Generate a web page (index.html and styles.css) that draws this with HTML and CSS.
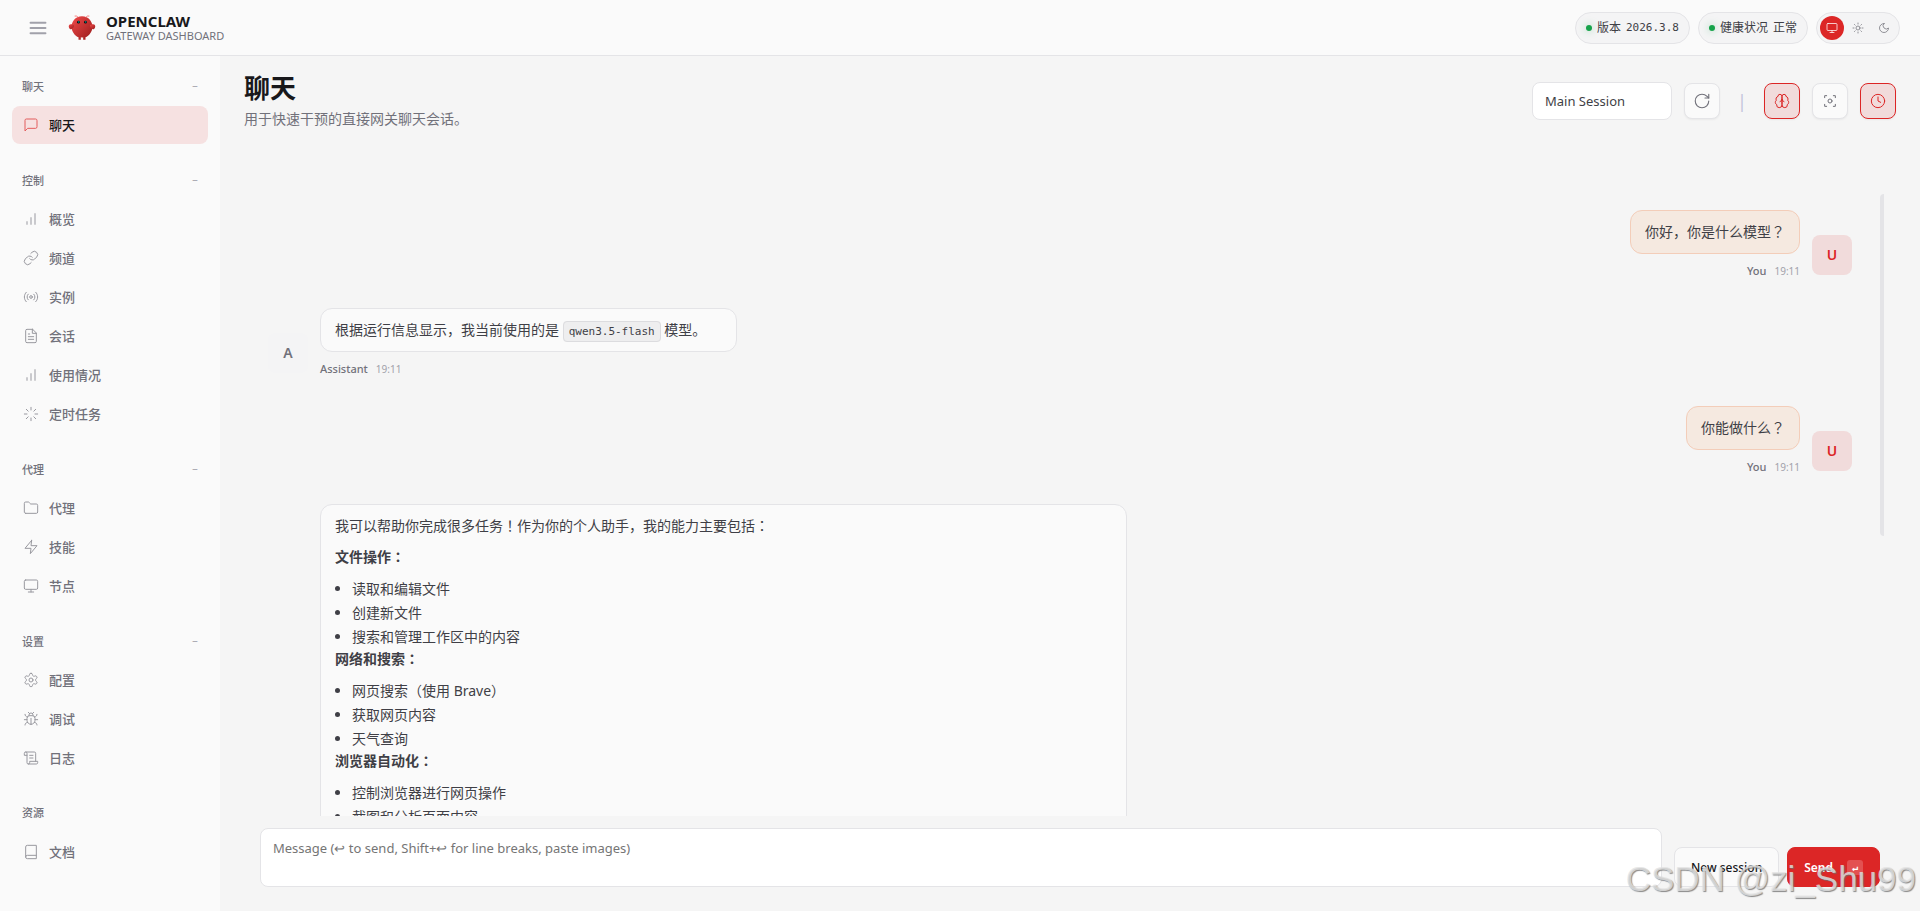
FILE: index.html
```html
<!DOCTYPE html>
<html lang="en">
<head>
    <meta charset="UTF-8">
    <meta name="viewport" content="width=device-width, initial-scale=1.0">
    <title>OpenClaw Control</title>
    <link rel="stylesheet" href="styles.css">
</head>
<body>
    <header class="topbar">
        <button class="menu-toggle" type="button" aria-label="Toggle sidebar">
            <svg class="icon icon-menu" viewBox="0 0 24 24"><path d="M2 5h20M2 12h20M2 19h20"/></svg>
        </button>
        <a class="brand" href="#">
            <svg class="brand-logo" viewBox="0 0 120 120" aria-hidden="true">
                <defs>
                    <linearGradient id="claw" x1="0" y1="0" x2="1" y2="1">
                        <stop offset="0" stop-color="#f04a4a"/>
                        <stop offset="1" stop-color="#991b1b"/>
                    </linearGradient>
                </defs>
                <path d="M60 10C30 10 15 35 15 55s15 40 30 45v10h10v-10s5 2 10 0v10h10v-10c15-5 30-25 30-45S90 10 60 10Z" fill="url(#claw)"/>
                <path d="M20 45C5 40 0 50 5 60s15 5 20-5c3-7 0-10-5-10Z" fill="url(#claw)"/>
                <path d="M100 45c15-5 20 5 15 15s-15 5-20-5c-3-7 0-10 5-10Z" fill="url(#claw)"/>
                <path d="M45 15Q35 5 30 8M75 15q10-10 15-7" fill="none" stroke="#f04a4a" stroke-width="3" stroke-linecap="round"/>
                <circle cx="45" cy="35" r="6" fill="#050810"/>
                <circle cx="75" cy="35" r="6" fill="#050810"/>
                <circle cx="46" cy="34" r="2.5" fill="#00e5cc"/>
                <circle cx="76" cy="34" r="2.5" fill="#00e5cc"/>
            </svg>
            <span class="brand-text">
                <strong class="brand-title">OPENCLAW</strong>
                <span class="brand-sub">GATEWAY DASHBOARD</span>
            </span>
        </a>
        <div class="topbar-status">
            <div class="pill"><span class="dot"></span><span>版本</span><span class="mono">2026.3.8</span></div>
            <div class="pill"><span class="dot"></span><span>健康状况</span><span>正常</span></div>
            <div class="theme-toggle">
                <button class="theme-btn active" type="button" aria-label="System theme">
                    <svg class="icon" viewBox="0 0 24 24"><rect x="2" y="3" width="20" height="14" rx="2"/><path d="M8 21h8M12 17v4"/></svg>
                </button>
                <button class="theme-btn" type="button" aria-label="Light theme">
                    <svg class="icon" viewBox="0 0 24 24"><circle cx="12" cy="12" r="4"/><path d="M12 2v2M12 20v2M4.93 4.93l1.41 1.41M17.66 17.66l1.41 1.41M2 12h2M20 12h2M6.34 17.66l-1.41 1.41M19.07 4.93l-1.41 1.41"/></svg>
                </button>
                <button class="theme-btn" type="button" aria-label="Dark theme">
                    <svg class="icon" viewBox="0 0 24 24"><path d="M12 3a6 6 0 0 0 9 9 9 9 0 1 1-9-9Z"/></svg>
                </button>
            </div>
        </div>
    </header>

    <div class="shell">
        <nav class="sidebar">
            <section class="nav-group">
                <button class="nav-label" type="button"><span>聊天</span><span class="nav-chevron">−</span></button>
                <a class="nav-item active" href="#"><svg class="icon" viewBox="0 0 24 24"><path d="M21 15a2 2 0 0 1-2 2H7l-4 4V5a2 2 0 0 1 2-2h14a2 2 0 0 1 2 2z"/></svg>聊天</a>
            </section>
            <section class="nav-group">
                <button class="nav-label" type="button"><span>控制</span><span class="nav-chevron">−</span></button>
                <a class="nav-item" href="#"><svg class="icon" viewBox="0 0 24 24"><path d="M12 20V10M18 20V4M6 20v-4"/></svg>概览</a>
                <a class="nav-item" href="#"><svg class="icon" viewBox="0 0 24 24"><path d="M10 13a5 5 0 0 0 7.54.54l3-3a5 5 0 0 0-7.07-7.07l-1.72 1.71"/><path d="M14 11a5 5 0 0 0-7.54-.54l-3 3a5 5 0 0 0 7.07 7.07l1.71-1.71"/></svg>频道</a>
                <a class="nav-item" href="#"><svg class="icon" viewBox="0 0 24 24"><circle cx="12" cy="12" r="2"/><path d="M4.9 19.1C1 15.2 1 8.8 4.9 4.9M7.8 16.2c-2.3-2.3-2.3-6.1 0-8.5M16.2 7.8c2.3 2.3 2.3 6.1 0 8.5M19.1 4.9C23 8.8 23 15.1 19.1 19"/></svg>实例</a>
                <a class="nav-item" href="#"><svg class="icon" viewBox="0 0 24 24"><path d="M14.5 2H6a2 2 0 0 0-2 2v16a2 2 0 0 0 2 2h12a2 2 0 0 0 2-2V7.5L14.5 2z"/><path d="M14 2v6h6M16 13H8M16 17H8M10 9H8"/></svg>会话</a>
                <a class="nav-item" href="#"><svg class="icon" viewBox="0 0 24 24"><path d="M12 20V10M18 20V4M6 20v-4"/></svg>使用情况</a>
                <a class="nav-item" href="#"><svg class="icon" viewBox="0 0 24 24"><path d="M12 2v4M12 18v4M4.93 4.93l2.83 2.83M16.24 16.24l2.83 2.83M2 12h4M18 12h4M4.93 19.07l2.83-2.83M16.24 7.76l2.83-2.83"/></svg>定时任务</a>
            </section>
            <section class="nav-group">
                <button class="nav-label" type="button"><span>代理</span><span class="nav-chevron">−</span></button>
                <a class="nav-item" href="#"><svg class="icon" viewBox="0 0 24 24"><path d="M4 20h16a2 2 0 0 0 2-2V8a2 2 0 0 0-2-2h-7.93a2 2 0 0 1-1.66-.9l-.82-1.2A2 2 0 0 0 7.93 3H4a2 2 0 0 0-2 2v13c0 1.1.9 2 2 2Z"/></svg>代理</a>
                <a class="nav-item" href="#"><svg class="icon" viewBox="0 0 24 24"><path d="M13 2 3 14h9l-1 8 10-12h-9l1-8z"/></svg>技能</a>
                <a class="nav-item" href="#"><svg class="icon" viewBox="0 0 24 24"><rect x="2" y="3" width="20" height="14" rx="2"/><path d="M8 21h8M12 17v4"/></svg>节点</a>
            </section>
            <section class="nav-group">
                <button class="nav-label" type="button"><span>设置</span><span class="nav-chevron">−</span></button>
                <a class="nav-item" href="#"><svg class="icon" viewBox="0 0 24 24"><path d="M12.22 2h-.44a2 2 0 0 0-2 2v.18a2 2 0 0 1-1 1.73l-.43.25a2 2 0 0 1-2 0l-.15-.08a2 2 0 0 0-2.73.73l-.22.38a2 2 0 0 0 .73 2.73l.15.1a2 2 0 0 1 1 1.72v.51a2 2 0 0 1-1 1.74l-.15.09a2 2 0 0 0-.73 2.73l.22.38a2 2 0 0 0 2.73.73l.15-.08a2 2 0 0 1 2 0l.43.25a2 2 0 0 1 1 1.73V20a2 2 0 0 0 2 2h.44a2 2 0 0 0 2-2v-.18a2 2 0 0 1 1-1.73l.43-.25a2 2 0 0 1 2 0l.15.08a2 2 0 0 0 2.73-.73l.22-.39a2 2 0 0 0-.73-2.73l-.15-.08a2 2 0 0 1-1-1.74v-.5a2 2 0 0 1 1-1.74l.15-.09a2 2 0 0 0 .73-2.73l-.22-.38a2 2 0 0 0-2.73-.73l-.15.08a2 2 0 0 1-2 0l-.43-.25a2 2 0 0 1-1-1.73V4a2 2 0 0 0-2-2z"/><circle cx="12" cy="12" r="3"/></svg>配置</a>
                <a class="nav-item" href="#"><svg class="icon" viewBox="0 0 24 24"><path d="m8 2 1.88 1.88M14.12 3.88 16 2M9 7.13v-1a3.003 3.003 0 1 1 6 0v1"/><path d="M12 20c-3.3 0-6-2.7-6-6v-3a4 4 0 0 1 4-4h4a4 4 0 0 1 4 4v3c0 3.3-2.7 6-6 6M12 20v-9M6.53 9C4.6 8.8 3 7.1 3 5M6 13H2M3 21c0-2.1 1.7-3.9 3.8-4M20.97 5c0 2.1-1.6 3.8-3.5 4M22 13h-4M17.2 17c2.1.1 3.8 1.9 3.8 4"/></svg>调试</a>
                <a class="nav-item" href="#"><svg class="icon" viewBox="0 0 24 24"><path d="M8 21h12a2 2 0 0 0 2-2v-2H10v2a2 2 0 1 1-4 0V5a2 2 0 1 0-4 0v3h4"/><path d="M19 17V5a2 2 0 0 0-2-2H4M15 8h-5M15 12h-5"/></svg>日志</a>
            </section>
            <section class="nav-group">
                <div class="nav-label"><span>资源</span></div>
                <a class="nav-item" href="#"><svg class="icon" viewBox="0 0 24 24"><path d="M4 19.5v-15A2.5 2.5 0 0 1 6.5 2H20v20H6.5a2.5 2.5 0 0 1 0-5H20"/></svg>文档</a>
            </section>
        </nav>

        <main class="content">
            <div class="page-header">
                <div>
                    <h1 class="page-title">聊天</h1>
                    <p class="page-sub">用于快速干预的直接网关聊天会话。</p>
                </div>
                <div class="chat-controls">
                    <select class="session-select" aria-label="Session">
                        <option>Main Session</option>
                    </select>
                    <button class="icon-btn" type="button" aria-label="Refresh">
                        <svg class="icon icon-refresh" viewBox="0 0 24 24"><path d="M21 12a9 9 0 1 1-9-9c2.52 0 4.93 1 6.74 2.74L21 8"/><path d="M21 3v5h-5"/></svg>
                    </button>
                    <span class="separator">|</span>
                    <button class="icon-btn active" type="button" aria-label="Toggle thinking">
                        <svg class="icon" viewBox="0 0 24 24"><path d="M12 5a3 3 0 1 0-5.997.125 4 4 0 0 0-2.526 5.77 4 4 0 0 0 .556 6.588A4 4 0 1 0 12 18Z"/><path d="M12 5a3 3 0 1 1 5.997.125 4 4 0 0 1 2.526 5.77 4 4 0 0 1-.556 6.588A4 4 0 1 1 12 18Z"/><path d="M15 13a4.500 4.500 0 0 1-3-4 4.500 4.500 0 0 1-3 4"/></svg>
                    </button>
                    <button class="icon-btn" type="button" aria-label="Focus mode">
                        <svg class="icon" viewBox="0 0 24 24"><path d="M4 7V4h3M20 7V4h-3M4 17v3h3M20 17v3h-3"/><circle cx="12" cy="12" r="3"/></svg>
                    </button>
                    <button class="icon-btn active" type="button" aria-label="Show cron sessions">
                        <svg class="icon" viewBox="0 0 24 24"><circle cx="12" cy="12" r="10"/><path d="M12 6v6l4 2"/></svg>
                    </button>
                </div>
            </div>

            <div class="chat">
                <div class="thread-wrap">
                    <div class="thread">
                        <div class="group user">
                            <div class="avatar">U</div>
                            <div class="messages">
                                <div class="bubble"><p>你好，你是什么模型<span class="punct">？</span></p></div>
                                <div class="meta"><span class="sender">You</span><time>19:11</time></div>
                            </div>
                        </div>
                        <div class="group assistant">
                            <div class="avatar">A</div>
                            <div class="messages">
                                <div class="bubble has-copy"><p>根据运行信息显示，我当前使用的是 <code>qwen3.5-flash</code> 模型。</p></div>
                                <div class="meta"><span class="sender">Assistant</span><time>19:11</time></div>
                            </div>
                        </div>
                        <div class="group user">
                            <div class="avatar">U</div>
                            <div class="messages">
                                <div class="bubble"><p>你能做什么<span class="punct">？</span></p></div>
                                <div class="meta"><span class="sender">You</span><time>19:11</time></div>
                            </div>
                        </div>
                        <div class="group assistant">
                            <div class="messages no-avatar">
                                <div class="bubble wide">
                                    <p>我可以帮助你完成很多任务<span class="punct">！</span>作为你的个人助手，我的能力主要包括<span class="punct">：</span></p>
                                    <p><strong>文件操作<span class="punct">：</span></strong></p>
                                    <ul>
                                        <li>读取和编辑文件</li>
                                        <li>创建新文件</li>
                                        <li>搜索和管理工作区中的内容</li>
                                    </ul>
                                    <p><strong>网络和搜索<span class="punct">：</span></strong></p>
                                    <ul>
                                        <li>网页搜索（使用 Brave）</li>
                                        <li>获取网页内容</li>
                                        <li>天气查询</li>
                                    </ul>
                                    <p><strong>浏览器自动化<span class="punct">：</span></strong></p>
                                    <ul>
                                        <li>控制浏览器进行网页操作</li>
                                        <li>截图和分析页面内容</li>
                                    </ul>
                                </div>
                            </div>
                        </div>
                    </div>
                    <div class="scroll-rail"><div class="scroll-thumb"></div></div>
                </div>

                <form class="compose">
                    <textarea class="compose-input" aria-label="Message" placeholder="Message (↩ to send, Shift+↩ for line breaks, paste images)"></textarea>
                    <button class="btn" type="button">New session</button>
                    <button class="btn primary" type="submit">Send<kbd>↵</kbd></button>
                </form>
            </div>
        </main>
    </div>
    <div class="watermark">CSDN @zi_Shu99</div>
</body>
</html>
```

FILE: styles.css
```css
* {
    box-sizing: border-box;
}
body {
    margin: 0;
    height: 100vh;
    display: flex;
    flex-direction: column;
    overflow: hidden;
    background: #f5f5f5;
    color: #3f3f46;
    font-family: "Noto Sans", "Noto Sans CJK SC", sans-serif;
    font-size: 14px;
    line-height: 22px;
}
button, select, textarea {
    font-family: inherit;
    color: inherit;
}
button {
    padding: 0;
    border: none;
    background: none;
    cursor: pointer;
}
a {
    color: inherit;
    text-decoration: none;
}
p, h1, ul {
    margin: 0;
}
.icon {
    width: 16px;
    height: 16px;
    flex-shrink: 0;
    fill: none;
    stroke: currentColor;
    stroke-width: 1.5;
    stroke-linecap: round;
    stroke-linejoin: round;
}

/* top bar */
.topbar {
    height: 56px;
    flex-shrink: 0;
    display: flex;
    align-items: center;
    padding: 0 20px;
    gap: 12px;
    background: #fafafa;
    border-bottom: 1px solid #e4e4e7;
}
.menu-toggle {
    width: 36px;
    height: 36px;
    display: flex;
    align-items: center;
    justify-content: center;
    color: #a1a1aa;
}
.icon-menu {
    width: 18px;
    height: 18px;
    stroke-width: 2.5;
}
.brand {
    display: flex;
    align-items: center;
    gap: 10px;
}
.brand-logo {
    width: 28px;
    height: 28px;
}
.brand-text {
    display: flex;
    flex-direction: column;
}
.brand-title {
    font-size: 15px;
    line-height: 16px;
    color: #18181b;
}
.brand-sub {
    font-size: 11px;
    line-height: 14px;
    color: #71717a;
}
.topbar-status {
    margin-left: auto;
    display: flex;
    align-items: center;
    gap: 8px;
}
.pill {
    height: 32px;
    display: flex;
    align-items: center;
    gap: 5px;
    padding: 0 10px;
    border: 1px solid #e4e4e7;
    border-radius: 16px;
    background: #f4f4f5;
    font-size: 12px;
}
.dot {
    width: 6px;
    height: 6px;
    border-radius: 50%;
    background: #16a34a;
    box-shadow: 0 0 8px rgba(22, 163, 74, 0.4);
}
.mono, code {
    font-family: "DejaVu Sans Mono", monospace;
    font-size: 11px;
}
.theme-toggle {
    height: 32px;
    display: flex;
    align-items: center;
    gap: 2px;
    padding: 0 3px;
    border: 1px solid #e4e4e7;
    border-radius: 16px;
    background: #f4f4f5;
}
.theme-btn {
    width: 24px;
    height: 24px;
    display: flex;
    align-items: center;
    justify-content: center;
    border-radius: 50%;
    color: #71717a;
}
.theme-btn .icon {
    width: 12px;
    height: 12px;
}
.theme-btn.active {
    background: #dc2626;
    color: #fff;
}

/* sidebar */
.shell {
    flex: 1;
    min-height: 0;
    display: flex;
}
.sidebar {
    width: 220px;
    flex-shrink: 0;
    display: flex;
    flex-direction: column;
    gap: 20px;
    padding: 14px 12px;
    background: #fafafa;
}
.nav-group {
    display: flex;
    flex-direction: column;
    gap: 1px;
}
.nav-label {
    height: 32px;
    margin-bottom: 3px;
    padding: 0 10px;
    display: flex;
    align-items: center;
    justify-content: space-between;
    font-size: 11px;
    font-weight: 500;
    color: #71717a;
}
.nav-chevron {
    font-size: 10px;
    color: #a1a1aa;
}
.nav-item {
    height: 38px;
    display: flex;
    align-items: center;
    gap: 10px;
    padding: 0 11px;
    border-radius: 8px;
    font-size: 13px;
    font-weight: 500;
    color: #71717a;
}
.nav-item .icon {
    opacity: 0.7;
}
.nav-item.active {
    background: #f6e1e1;
    color: #18181b;
}
.nav-item.active .icon {
    color: #dc2626;
}

/* page header */
.content {
    flex: 1;
    min-width: 0;
    display: flex;
    flex-direction: column;
    padding: 16px 24px 24px;
}
.page-header {
    display: flex;
    align-items: center;
    justify-content: space-between;
}
.page-title {
    font-size: 26px;
    line-height: 32px;
    font-weight: 700;
    color: #18181b;
}
.page-sub {
    margin-top: 4px;
    color: #71717a;
}
.chat-controls {
    display: flex;
    align-items: center;
    gap: 12px;
}
.session-select {
    appearance: none;
    width: 140px;
    height: 38px;
    padding: 0 12px;
    border: 1px solid #e4e4e7;
    border-radius: 8px;
    background: #fff;
    font-size: 13px;
}
.icon-btn {
    width: 36px;
    height: 36px;
    display: flex;
    align-items: center;
    justify-content: center;
    border: 1px solid #e4e4e7;
    border-radius: 8px;
    background: #fafafa;
    color: #71717a;
    box-shadow: 0 1px 2px rgba(0, 0, 0, 0.05);
}
.icon-btn.active {
    border-color: #dc2626;
    background: #f1dbdb;
    color: #dc2626;
}
.icon-refresh {
    width: 18px;
    height: 18px;
}
.separator {
    width: 20px;
    text-align: center;
    font-size: 18px;
    color: #c4c4dc;
}

/* chat thread */
.chat {
    flex: 1;
    min-height: 0;
    display: flex;
    flex-direction: column;
    margin-top: 64px;
    padding: 0 16px;
}
.thread-wrap {
    flex: 1;
    min-height: 0;
    display: flex;
    margin-right: -4px;
}
.thread {
    flex: 1;
    overflow: hidden;
    padding: 16px 28px 0 8px;
}
.scroll-rail {
    width: 4px;
}
.scroll-thumb {
    height: 55%;
    border-radius: 4px 0 0 4px;
    background: #e4e4e7;
}
.group {
    display: flex;
    align-items: flex-end;
    gap: 12px;
    margin-bottom: 28px;
}
.group.user {
    flex-direction: row-reverse;
}
.avatar {
    width: 40px;
    height: 40px;
    flex-shrink: 0;
    margin-bottom: 5px;
    display: flex;
    align-items: center;
    justify-content: center;
    border-radius: 8px;
    background: #f4f4f5;
    font-weight: 600;
    color: #71717a;
}
.user .avatar {
    background: #f1dbdb;
    color: #dc2626;
}
.messages {
    display: flex;
    flex-direction: column;
    align-items: flex-start;
    gap: 8px;
}
.messages.no-avatar {
    flex: 1;
    padding-left: 52px;
}
.user .messages {
    align-items: flex-end;
}
.bubble {
    padding: 10px 14px;
    border: 1px solid #e4e4e7;
    border-radius: 12px;
    background: #fafafa;
}
.bubble.has-copy {
    padding-right: 30px;
}
.bubble.wide {
    width: 100%;
    max-width: 807px;
}
.user .bubble {
    border-color: #f3cdb9;
    background: #f5e9e0;
}
.bubble p + p {
    margin-top: 9px;
}
.bubble ul {
    margin-top: 10px;
    padding-left: 17px;
}
.bubble li + li {
    margin-top: 2px;
}
/* full-width punctuation centred in its cell */
.punct {
    font-family: "Noto Sans CJK JP", sans-serif;
    line-height: 1;
}
code {
    padding: 3px 5px;
    border: 1px solid #dcdcdf;
    border-radius: 4px;
    background: #eeeeef;
    line-height: 1;
}
.meta {
    display: flex;
    align-items: baseline;
    gap: 8px;
    font-size: 10px;
    line-height: 18px;
    color: #a1a1aa;
}
.sender {
    font-size: 11px;
    font-weight: 500;
    color: #71717a;
}

/* compose row */
.compose {
    display: flex;
    align-items: flex-end;
    gap: 8px;
    padding-top: 12px;
}
.compose-input {
    flex: 1;
    height: 59px;
    margin-right: 4px;
    padding: 8px 12px;
    border: 1px solid #e4e4e7;
    border-radius: 8px;
    background: #fff;
    font-size: 13px;
    line-height: 22px;
    resize: none;
}
.compose-input::placeholder {
    color: #757575;
}
.btn {
    height: 40px;
    display: flex;
    align-items: center;
    gap: 14px;
    padding: 0 16px;
    border: 1px solid #e4e4e7;
    border-radius: 8px;
    background: #fafafa;
    font-size: 12px;
    font-weight: 500;
    color: #18181b;
}
.btn.primary {
    border-color: #dc2626;
    background: #dc2626;
    color: #fff;
    font-weight: 600;
}
kbd {
    width: 16px;
    height: 15px;
    border-radius: 3px;
    background: rgba(255, 255, 255, 0.2);
    font-family: "DejaVu Sans Mono", monospace;
    font-size: 10px;
    line-height: 15px;
    text-align: center;
}

.watermark {
    position: absolute;
    right: 4px;
    bottom: 12px;
    font-family: "Liberation Sans", Arial, sans-serif;
    font-size: 35px;
    line-height: 40px;
    color: rgba(228, 228, 228, 0.8);
    text-shadow: 1px 1px 1px rgba(110, 110, 110, 0.8);
    pointer-events: none;
}
```
